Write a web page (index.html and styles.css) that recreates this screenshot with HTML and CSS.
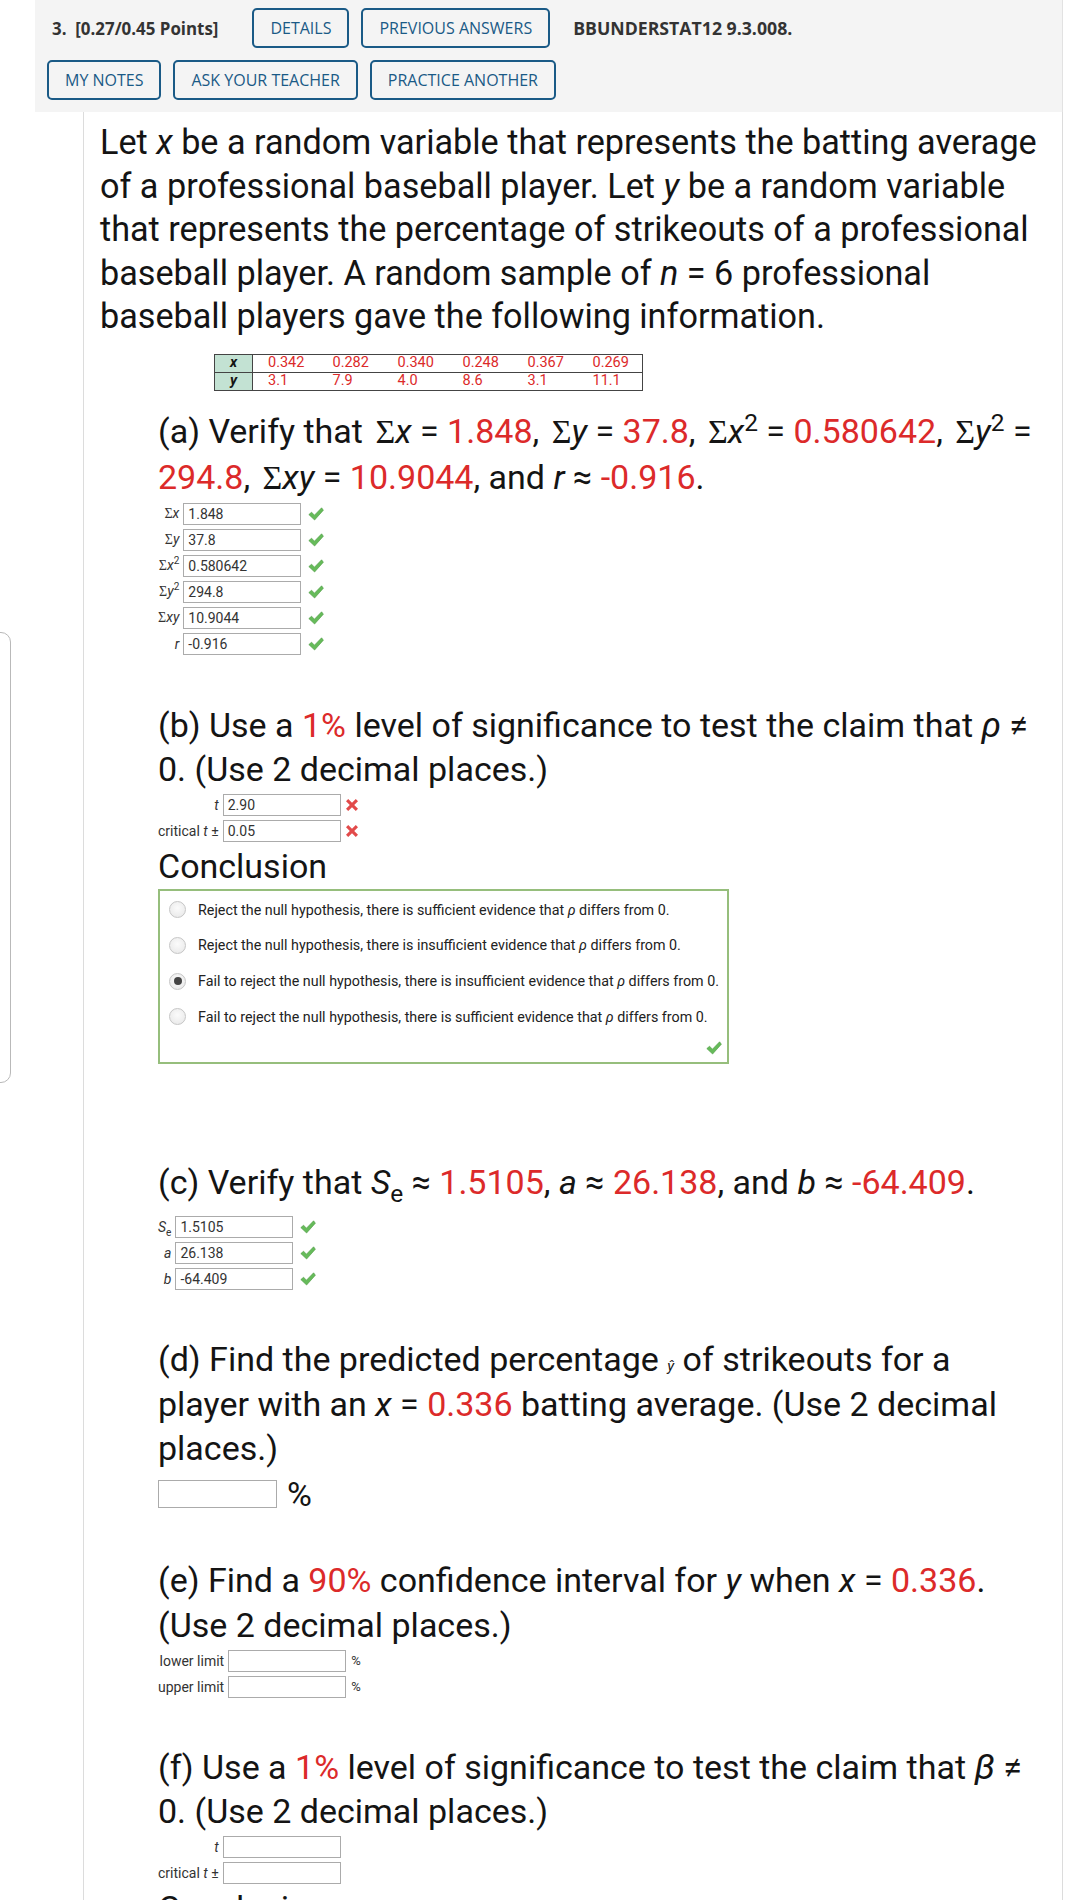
FILE: index.html
```html
<!DOCTYPE html>
<html>
<head>
<meta charset="utf-8">
<link rel="stylesheet" href="styles.css">
</head>
<body>
<div class="sidetab"></div>
<div class="page">
  <div class="qhead">
    <div class="hrow">
      <span class="qnum">3.&nbsp; [0.27/0.45 Points]</span>
      <span class="btn">DETAILS</span>
      <span class="btn">PREVIOUS ANSWERS</span>
      <span class="qcode">BBUNDERSTAT12 9.3.008.</span>
    </div>
    <div class="hrow hrow2">
      <span class="btn">MY NOTES</span>
      <span class="btn">ASK YOUR TEACHER</span>
      <span class="btn">PRACTICE ANOTHER</span>
    </div>
  </div>

  <div class="qbody">
    <p class="intro">Let <i>x</i> be a random variable that represents the batting average<br>of a professional baseball player. Let <i>y</i> be a random variable<br>that represents the percentage of strikeouts of a professional<br>baseball player. A random sample of <i>n</i> = 6 professional<br>baseball players gave the following information.</p>

    <table class="data">
      <tr><th>x</th><td>0.342</td><td>0.282</td><td>0.340</td><td>0.248</td><td>0.367</td><td>0.269</td></tr>
      <tr><th>y</th><td>3.1</td><td>7.9</td><td>4.0</td><td>8.6</td><td>3.1</td><td>11.1</td></tr>
    </table>

    <div class="part part-a">
      <div class="ptitle">(a) Verify that <span class="sig">Σ</span><i>x</i> = <span class="red">1.848</span>, <span class="sig">Σ</span><i>y</i> = <span class="red">37.8</span>, <span class="sig">Σ</span><i>x</i><sup>2</sup> = <span class="red">0.580642</span>, <span class="sig">Σ</span><i>y</i><sup>2</sup> =<br><span class="red">294.8</span>, <span class="sig">Σ</span><i>xy</i> = <span class="red">10.9044</span>, and <i>r</i> ≈ <span class="red">-0.916</span>.</div>
      <div class="answers">
        <span class="lbl"><span class="sig">Σ</span><i>x</i></span><span class="box">1.848</span><svg class="ok" viewBox="0 0 16 14"><path d="M0.8 7.6 L3.6 5.2 L6.4 8.2 L13.6 0.8 L15.4 3.2 L6.6 13 Z"/></svg>
        <span class="lbl"><span class="sig">Σ</span><i>y</i></span><span class="box">37.8</span><svg class="ok" viewBox="0 0 16 14"><path d="M0.8 7.6 L3.6 5.2 L6.4 8.2 L13.6 0.8 L15.4 3.2 L6.6 13 Z"/></svg>
        <span class="lbl"><span class="sig">Σ</span><i>x</i><sup>2</sup></span><span class="box">0.580642</span><svg class="ok" viewBox="0 0 16 14"><path d="M0.8 7.6 L3.6 5.2 L6.4 8.2 L13.6 0.8 L15.4 3.2 L6.6 13 Z"/></svg>
        <span class="lbl"><span class="sig">Σ</span><i>y</i><sup>2</sup></span><span class="box">294.8</span><svg class="ok" viewBox="0 0 16 14"><path d="M0.8 7.6 L3.6 5.2 L6.4 8.2 L13.6 0.8 L15.4 3.2 L6.6 13 Z"/></svg>
        <span class="lbl"><span class="sig">Σ</span><i>xy</i></span><span class="box">10.9044</span><svg class="ok" viewBox="0 0 16 14"><path d="M0.8 7.6 L3.6 5.2 L6.4 8.2 L13.6 0.8 L15.4 3.2 L6.6 13 Z"/></svg>
        <span class="lbl"><i>r</i></span><span class="box">-0.916</span><svg class="ok" viewBox="0 0 16 14"><path d="M0.8 7.6 L3.6 5.2 L6.4 8.2 L13.6 0.8 L15.4 3.2 L6.6 13 Z"/></svg>
      </div>
    </div>

    <div class="part part-b">
      <div class="ptitle">(b) Use a <span class="red">1%</span> level of significance to test the claim that <i class="greek">ρ</i> ≠<br>0. (Use 2 decimal places.)</div>
      <div class="answers">
        <span class="lbl"><i>t</i></span><span class="box">2.90</span><svg class="bad" viewBox="0 0 14 14"><path d="M1 3.2 L3.2 1 L7 4.8 L10.8 1 L13 3.2 L9.2 7 L13 10.8 L10.8 13 L7 9.2 L3.2 13 L1 10.8 L4.8 7 Z"/></svg>
        <span class="lbl">critical <i>t</i> ±</span><span class="box">0.05</span><svg class="bad" viewBox="0 0 14 14"><path d="M1 3.2 L3.2 1 L7 4.8 L10.8 1 L13 3.2 L9.2 7 L13 10.8 L10.8 13 L7 9.2 L3.2 13 L1 10.8 L4.8 7 Z"/></svg>
      </div>
      <div class="ptitle">Conclusion</div>
      <div class="concl">
        <div class="opt"><span class="radio"></span>Reject the null hypothesis, there is sufficient evidence that <i>ρ</i> differs from 0.</div>
        <div class="opt"><span class="radio"></span>Reject the null hypothesis, there is insufficient evidence that <i>ρ</i> differs from 0.</div>
        <div class="opt"><span class="radio on"></span>Fail to reject the null hypothesis, there is insufficient evidence that <i>ρ</i> differs from 0.</div>
        <div class="opt"><span class="radio"></span>Fail to reject the null hypothesis, there is sufficient evidence that <i>ρ</i> differs from 0.</div>
        <svg class="ok concl-ok" viewBox="0 0 16 14"><path d="M0.8 7.6 L3.6 5.2 L6.4 8.2 L13.6 0.8 L15.4 3.2 L6.6 13 Z"/></svg>
      </div>
    </div>

    <div class="part part-c">
      <div class="ptitle">(c) Verify that <i>S</i><sub>e</sub> ≈ <span class="red">1.5105</span>, <i>a</i> ≈ <span class="red">26.138</span>, and <i>b</i> ≈ <span class="red">-64.409</span>.</div>
      <div class="answers answers-c">
        <span class="lbl"><i>S</i><sub>e</sub></span><span class="box">1.5105</span><svg class="ok" viewBox="0 0 16 14"><path d="M0.8 7.6 L3.6 5.2 L6.4 8.2 L13.6 0.8 L15.4 3.2 L6.6 13 Z"/></svg>
        <span class="lbl"><i>a</i></span><span class="box">26.138</span><svg class="ok" viewBox="0 0 16 14"><path d="M0.8 7.6 L3.6 5.2 L6.4 8.2 L13.6 0.8 L15.4 3.2 L6.6 13 Z"/></svg>
        <span class="lbl"><i>b</i></span><span class="box">-64.409</span><svg class="ok" viewBox="0 0 16 14"><path d="M0.8 7.6 L3.6 5.2 L6.4 8.2 L13.6 0.8 L15.4 3.2 L6.6 13 Z"/></svg>
      </div>
    </div>

    <div class="part part-d">
      <div class="ptitle">(d) Find the predicted percentage <i class="yhat">ŷ</i> of strikeouts for a<br>player with an <i>x</i> = <span class="red">0.336</span> batting average. (Use 2 decimal<br>places.)</div>
      <div class="pctrow"><span class="box box-lg"></span><span>%</span></div>
    </div>

    <div class="part part-e">
      <div class="ptitle">(e) Find a <span class="red">90%</span> confidence interval for <i>y</i> when <i>x</i> = <span class="red">0.336</span>.<br>(Use 2 decimal places.)</div>
      <div class="answers">
        <span class="lbl">lower limit</span><span class="box"></span><span class="unit">%</span>
        <span class="lbl">upper limit</span><span class="box"></span><span class="unit">%</span>
      </div>
    </div>

    <div class="part part-f">
      <div class="ptitle">(f) Use a <span class="red">1%</span> level of significance to test the claim that <i class="greek">β</i> ≠<br>0. (Use 2 decimal places.)</div>
      <div class="answers">
        <span class="lbl"><i>t</i></span><span class="box"></span><span></span>
        <span class="lbl">critical <i>t</i> ±</span><span class="box"></span><span></span>
      </div>
      <div class="ptitle">Conclusion</div>
    </div>
  </div>
</div>
</body>
</html>
```

FILE: styles.css
```css
* { box-sizing: border-box; }

html, body {
  margin: 0;
  background: #ffffff;
}

body {
  font-family: Roboto, "Liberation Sans", sans-serif;
  color: #141414;
  overflow: hidden;
}

.sidetab {
  position: absolute;
  left: -20px;
  top: 632px;
  width: 31px;
  height: 451px;
  border: 1.5px solid #b9b9b9;
  border-radius: 10px;
  background: #ffffff;
}

.page {
  margin-left: 35px;
  width: 1028px;
}

/* ---------- header ---------- */
.qhead {
  background: #f4f4f4;
  height: 112px;
  padding: 8px 0 0 12px;
  border-right: 1px solid #e2e2e2;
}

.hrow {
  display: flex;
  align-items: center;
  gap: 12px;
  height: 40px;
}

.hrow2 {
  margin-top: 12px;
}

.qnum,
.qcode {
  font-family: "Open Sans", sans-serif;
  font-weight: 700;
  color: #333333;
  white-space: nowrap;
}

.qnum {
  font-size: 16.9px;
  margin-left: 5px;
  margin-right: 22px;
}

.qcode {
  font-size: 17.7px;
  margin-left: 11px;
}

.btn {
  font-family: "Open Sans", sans-serif;
  font-size: 16px;
  color: #1a5a86;
  border: 2px solid #1a5a86;
  border-radius: 5px;
  height: 40px;
  padding: 0 16px;
  display: flex;
  align-items: center;
  white-space: nowrap;
}

/* ---------- body ---------- */
.qbody {
  margin-left: 48px;
  border-left: 1px solid #dcdcdc;
  border-right: 1px solid #dcdcdc;
  padding: 9px 10px 60px 16px;
  min-height: 1800px;
}

.intro {
  margin: 0;
  font-size: 34.2px;
  line-height: 43.6px;
  white-space: nowrap;
}

.red {
  color: #dc2a2a;
}

.sig {
  font-family: "Liberation Serif", "DejaVu Serif", serif;
}

.ptitle .sig {
  margin-left: 4px;
}

sup, sub {
  line-height: 0;
  font-size: 0.72em;
}

.data {
  margin: 15px 0 0 114px;
  border-collapse: collapse;
  font-size: 14.5px;
}

.data th {
  width: 38px;
  height: 18px;
  padding: 0;
  background: #c3e2d3;
  border: 1px solid #444444;
  font-style: italic;
  font-weight: bold;
  line-height: 16px;
  text-align: center;
}

.data td {
  width: 65px;
  height: 18px;
  padding: 0 0 0 15px;
  color: #dc2a2a;
  line-height: 16px;
  border-top: 1px solid #444444;
  border-bottom: 1px solid #444444;
}

.data td:last-child {
  border-right: 1px solid #444444;
}

.part {
  margin-left: 58px;
}

.part-a { margin-top: 18px; }
.part-b { margin-top: 46px; }
.part-c { margin-top: 96px; }
.part-d { margin-top: 45px; }
.part-e { margin-top: 42px; }
.part-f { margin-top: 45px; }

.ptitle {
  font-size: 34px;
  line-height: 44.8px;
  white-space: nowrap;
}

.greek {
  font-size: 1.05em;
}

.yhat {
  font-size: 15px;
  line-height: 0;
}

.answers {
  display: grid;
  grid-template-columns: auto 118px 20px;
  grid-auto-rows: 26px;
  column-gap: 4px;
  align-items: center;
  justify-content: start;
  font-size: 14px;
  color: #333333;
}

.answers-c {
  margin-top: 9px;
}

.lbl {
  text-align: right;
  white-space: nowrap;
}

.box {
  display: block;
  height: 22px;
  border: 1px solid #ababab;
  padding: 0 4px;
  line-height: 21px;
  color: #333333;
  background: #ffffff;
}

.unit {
  font-size: 13px;
  padding-left: 1px;
}

.ok {
  width: 16px;
  height: 14px;
  margin-left: 3px;
  fill: #66bb5a;
  stroke: #4d9a43;
  stroke-width: 0.6;
  stroke-linejoin: round;
}

.bad {
  width: 14px;
  height: 14px;
  fill: #e24a4a;
}

/* conclusion */
.concl {
  width: 571px;
  height: 175px;
  border: 2px solid #96be7c;
  padding: 1px 0 0 9px;
  display: flex;
  flex-direction: column;
}

.opt {
  display: flex;
  align-items: center;
  height: 35.7px;
  font-size: 14.3px;
  color: #222222;
  white-space: pre;
}

.radio {
  width: 17px;
  height: 17px;
  border-radius: 50%;
  border: 1px solid #c6c6c6;
  background: radial-gradient(circle at 50% 40%, #fbfbfb 0%, #e6e6e6 100%);
  margin-right: 12px;
  flex: none;
  display: flex;
  align-items: center;
  justify-content: center;
}

.radio.on::after {
  content: "";
  width: 8px;
  height: 8px;
  border-radius: 50%;
  background: #444444;
}

.concl-ok {
  align-self: flex-end;
  margin-top: auto;
  margin-right: 5px;
  margin-bottom: 7px;
}

/* (d) */
.pctrow {
  display: flex;
  align-items: center;
  gap: 10px;
  height: 44.8px;
  font-size: 34px;
}

.box-lg {
  width: 119px;
  height: 28px;
}
```
